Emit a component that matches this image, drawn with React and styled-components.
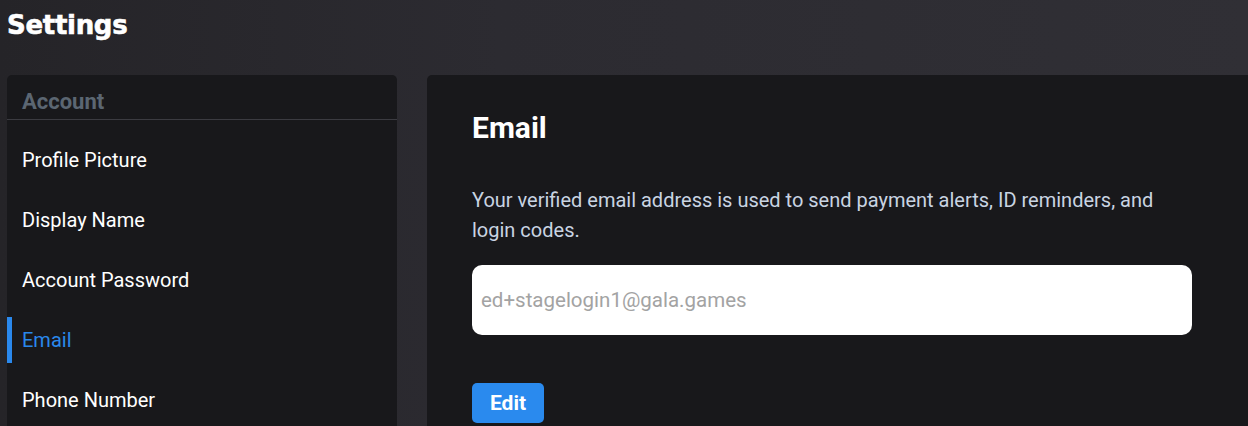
import React from "react";
import styled, { createGlobalStyle } from "styled-components";

const GlobalStyle = createGlobalStyle`
  html, body {
    margin: 0;
    padding: 0;
    background: #2b2a30;
    overflow: hidden;
  }
  * {
    box-sizing: border-box;
  }
`;

const Page = styled.div`
  min-height: 100vh;
  padding: 0 0 0 7px;
  background: linear-gradient(90deg, #252428 0%, #2c2b31 40%, #302f35 100%);
  font-family: Roboto, "Noto Sans", sans-serif;
`;

const Title = styled.h1`
  margin: 0;
  height: 75px;
  padding-top: 10px;
  font-family: "DejaVu Sans", sans-serif;
  font-weight: 900;
  font-size: 26px;
  letter-spacing: -0.3px;
  color: #ffffff;
  -webkit-text-stroke: 0.6px #ffffff;
`;

const Layout = styled.div`
  display: flex;
  gap: 30px;
  align-items: flex-start;
`;

const Sidebar = styled.nav`
  width: 390px;
  flex-shrink: 0;
  height: 360px;
  background: #18181b;
  border-radius: 5px 5px 0 0;
`;

const SideHeader = styled.div`
  height: 45px;
  padding: 14px 0 0 15px;
  font-size: 22px;
  font-weight: 700;
  color: #5b6672;
  border-bottom: 1px solid #3b3b41;
`;

const ItemList = styled.ul`
  list-style: none;
  margin: 0;
  padding: 17px 0 0;
  display: flex;
  flex-direction: column;
  gap: 14px;
`;

const Item = styled.li`
  height: 46px;
  display: flex;
  align-items: center;
  padding-left: 10px;
  font-size: 20px;
  color: ${p => (p.$active ? "#2a88ec" : "#ffffff")};
  border-left: 5px solid ${p => (p.$active ? "#2a88ec" : "transparent")};
`;

const Main = styled.main`
  flex: 1;
  height: 360px;
  background: #18181b;
  border-radius: 5px 0 0 0;
  padding: 35px 45px 0;
`;

const Heading = styled.h2`
  margin: 0;
  font-size: 30px;
  font-weight: 700;
  color: #ffffff;
  line-height: 36px;
`;

const Description = styled.p`
  margin: 39px 0 0;
  max-width: 720px;
  font-size: 20px;
  line-height: 30px;
  color: #c9d4e2;
`;

const EmailBox = styled.div`
  margin-top: 20px;
  width: 720px;
  height: 70px;
  background: #ffffff;
  border-radius: 10px;
  display: flex;
  align-items: center;
  padding-left: 9px;
  font-size: 20.5px;
  color: #a3a3a3;
`;

const EditButton = styled.button`
  margin-top: 48px;
  width: 72px;
  height: 40px;
  border: none;
  border-radius: 5px;
  background: #2a8aee;
  color: #ffffff;
  font-family: Roboto, sans-serif;
  font-size: 21px;
  font-weight: 700;
  cursor: pointer;
`;

const items = [
  "Profile Picture",
  "Display Name",
  "Account Password",
  "Email",
  "Phone Number",
];

export default function App() {
  return (
    <Page>
      <GlobalStyle />
      <Title>Settings</Title>
      <Layout>
        <Sidebar>
          <SideHeader>Account</SideHeader>
          <ItemList>
            {items.map(label => (
              <Item key={label} $active={label === "Email"}>
                {label}
              </Item>
            ))}
          </ItemList>
        </Sidebar>
        <Main>
          <Heading>Email</Heading>
          <Description>
            Your verified email address is used to send payment alerts, ID
            reminders, and login codes.
          </Description>
          <EmailBox>ed+stagelogin1@gala.games</EmailBox>
          <EditButton>Edit</EditButton>
        </Main>
      </Layout>
    </Page>
  );
}
